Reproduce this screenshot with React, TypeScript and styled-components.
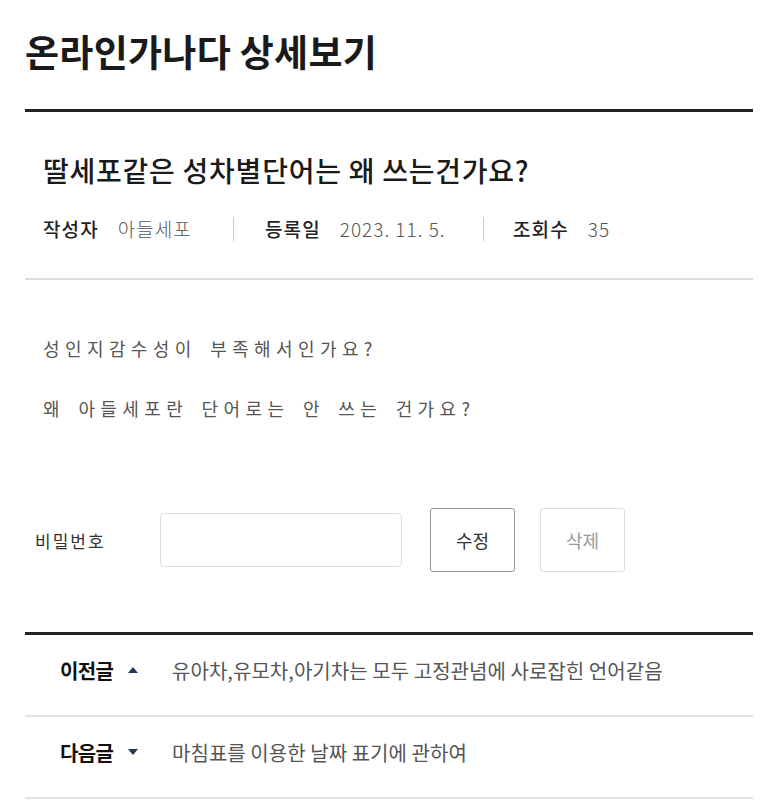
import React from "react";
import styled, { createGlobalStyle } from "styled-components";

const Global = createGlobalStyle`
  html, body { margin: 0; padding: 0; background: #fff; }
  body { font-family: "Noto Sans CJK KR", "Noto Sans", sans-serif; color: #222; }
  * { box-sizing: border-box; }
`;

const Page = styled.div`
  width: 777px;
  padding: 0 24px 0 25px;
`;

const PageTitle = styled.h1`
  margin: 0;
  padding-top: 26px;
  height: 109px;
  font-size: 37px;
  font-weight: 700;
  letter-spacing: 0.3px;
  line-height: 50px;
  color: #1a1a1a;
`;

const Article = styled.section`
  border-top: 3px solid #222;
`;

const Head = styled.header`
  padding: 0 18px;
  height: 168px;
  border-bottom: 2px solid #ddd;
  display: flex;
  flex-direction: column;
`;

const Subject = styled.h2`
  margin: 0;
  padding-top: 38px;
  font-size: 28px;
  font-weight: 500;
  letter-spacing: 0.75px;
  line-height: 40px;
  color: #1a1a1a;
`;

const Meta = styled.div`
  margin-top: 26px;
  display: flex;
  align-items: center;
  height: 26px;
`;

const MetaItem = styled.div<{ $w: number }>`
  display: flex;
  align-items: center;
  gap: 19px;
  width: ${(p) => p.$w}px;
  font-size: 19px;
  line-height: 26px;
`;

const MetaLabel = styled.span`
  font-weight: 500;
  letter-spacing: 1.1px;
  color: #222;
`;

const MetaValue = styled.span`
  font-weight: 300;
  letter-spacing: 1px;
  color: #555;
`;

const Divider = styled.span<{ $gap: number }>`
  width: 1px;
  height: 24px;
  background: #ccc;
  margin-right: ${(p) => p.$gap}px;
`;

const Body = styled.div`
  padding: 54px 18px 0;
  height: 198px;
`;

const Para = styled.p`
  margin: 0 0 31px;
  font-size: 18px;
  line-height: 29px;
  letter-spacing: 5.4px;
  word-spacing: 4px;
  color: #555;
`;

const PwRow = styled.div`
  display: flex;
  align-items: center;
  padding-left: 10px;
  height: 154px;
  padding-bottom: 30px;
`;

const PwLabel = styled.label`
  width: 125px;
  font-size: 17px;
  letter-spacing: 2px;
  color: #333;
`;

const PwInput = styled.input`
  width: 242px;
  height: 54px;
  border: 1px solid #ddd;
  border-radius: 4px;
  margin-right: 28px;
  outline: none;
`;

const Btn = styled.button<{ $muted?: boolean }>`
  width: 85px;
  height: 64px;
  margin-right: 25px;
  background: #fff;
  border: 1.5px solid ${(p) => (p.$muted ? "#ddd" : "#999")};
  border-radius: 3px;
  font-family: inherit;
  font-size: 18px;
  color: ${(p) => (p.$muted ? "#999" : "#333")};
  padding: 0;
`;

const Nav = styled.nav`
  border-top: 3px solid #222;
`;

const NavRow = styled.div`
  display: flex;
  align-items: center;
  height: 82px;
  padding-left: 35px;
  padding-bottom: 10px;
  border-bottom: 2px solid #e2e2e2;
`;

const NavLabel = styled.span`
  font-size: 20px;
  font-weight: 700;
  letter-spacing: -0.6px;
  color: #111;
  width: 68px;
`;

const Tri = styled.span<{ $down?: boolean }>`
  width: 0;
  height: 0;
  border-left: 5px solid transparent;
  border-right: 5px solid transparent;
  ${(p) =>
    p.$down
      ? "border-top: 6px solid #1c3a57;"
      : "border-bottom: 6px solid #1c3a57;"}
  margin-right: 34px;
`;

const NavText = styled.span`
  font-size: 20px;
  font-weight: 400;
  letter-spacing: 0.05px;
  color: #555;
`;

export default function App() {
  return (
    <>
      <Global />
      <Page>
        <PageTitle>온라인가나다 상세보기</PageTitle>
        <Article>
          <Head>
            <Subject>딸세포같은 성차별단어는 왜 쓰는건가요?</Subject>
            <Meta>
              <MetaItem $w={190}>
                <MetaLabel>작성자</MetaLabel>
                <MetaValue>아들세포</MetaValue>
              </MetaItem>
              <Divider $gap={31} />
              <MetaItem $w={218}>
                <MetaLabel>등록일</MetaLabel>
                <MetaValue>2023. 11. 5.</MetaValue>
              </MetaItem>
              <Divider $gap={29} />
              <MetaItem $w={120}>
                <MetaLabel>조회수</MetaLabel>
                <MetaValue>35</MetaValue>
              </MetaItem>
            </Meta>
          </Head>
          <Body>
            <Para>성인지감수성이 부족해서인가요?</Para>
            <Para>왜 아들세포란 단어로는 안 쓰는 건가요?</Para>
          </Body>
          <PwRow>
            <PwLabel>비밀번호</PwLabel>
            <PwInput type="password" />
            <Btn>수정</Btn>
            <Btn $muted>삭제</Btn>
          </PwRow>
        </Article>
        <Nav>
          <NavRow>
            <NavLabel>이전글</NavLabel>
            <Tri />
            <NavText>유아차,유모차,아기차는 모두 고정관념에 사로잡힌 언어같음</NavText>
          </NavRow>
          <NavRow>
            <NavLabel>다음글</NavLabel>
            <Tri $down />
            <NavText>마침표를 이용한 날짜 표기에 관하여</NavText>
          </NavRow>
        </Nav>
      </Page>
    </>
  );
}
